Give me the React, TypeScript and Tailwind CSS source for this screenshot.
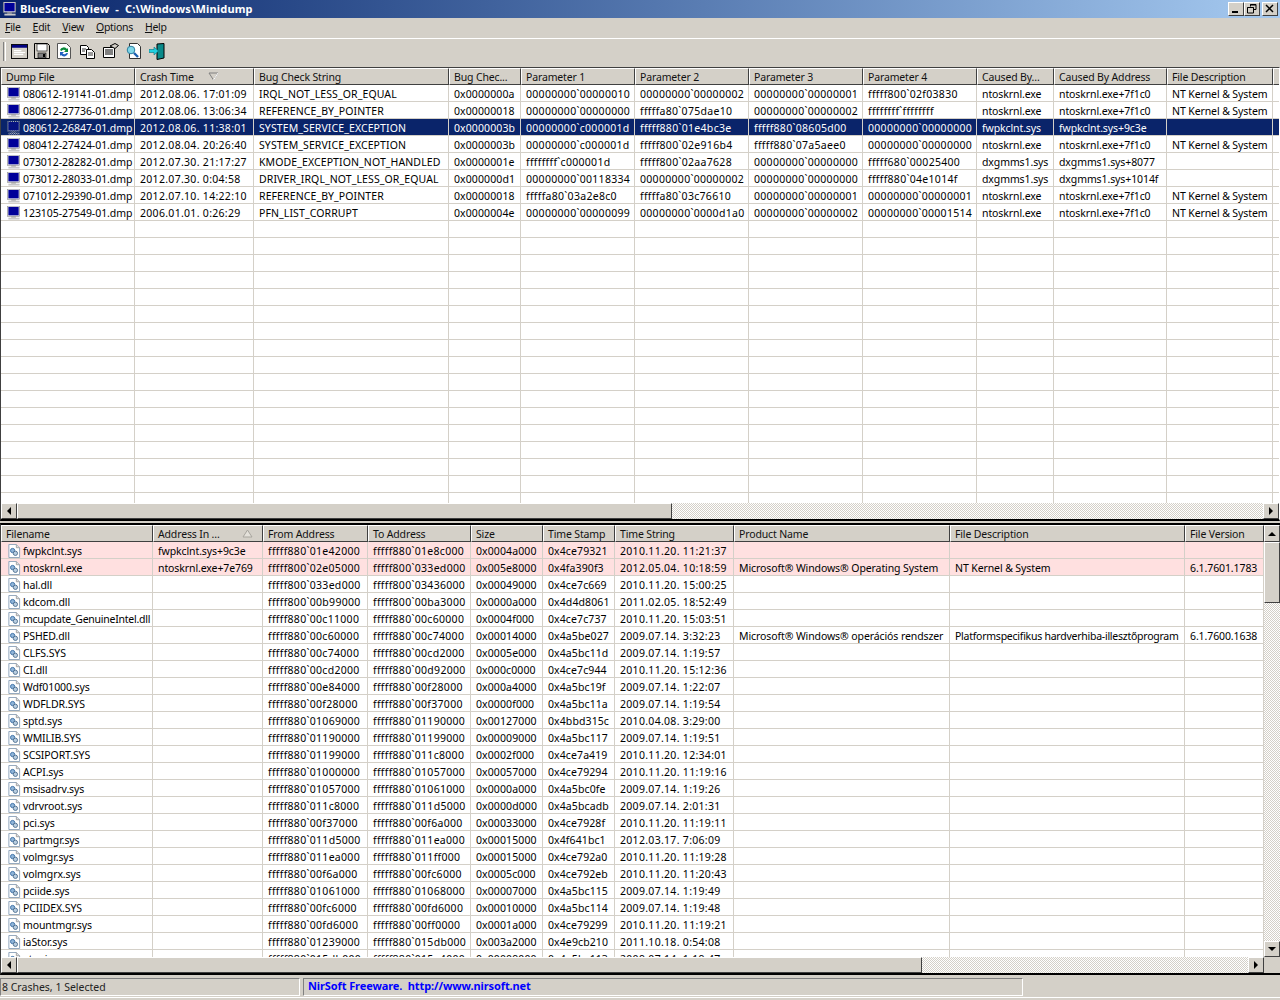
import type { ReactNode } from "react";

const top = [
  { w: 134, title: "Dump File" },
  { w: 119, title: "Crash Time", sort: "down" },
  { w: 195, title: "Bug Check String" },
  { w: 72, title: "Bug Chec..." },
  { w: 114, title: "Parameter 1" },
  { w: 114, title: "Parameter 2" },
  { w: 114, title: "Parameter 3" },
  { w: 114, title: "Parameter 4" },
  { w: 77, title: "Caused By..." },
  { w: 113, title: "Caused By Address" },
  { w: 106, title: "File Description" },
];

const crashes = [
  ["080612-19141-01.dmp", "2012.08.06. 17:01:09", "IRQL_NOT_LESS_OR_EQUAL", "0x0000000a", "00000000`00000010", "00000000`00000002", "00000000`00000001", "fffff800`02f03830", "ntoskrnl.exe", "ntoskrnl.exe+7f1c0", "NT Kernel & System"],
  ["080612-27736-01.dmp", "2012.08.06. 13:06:34", "REFERENCE_BY_POINTER", "0x00000018", "00000000`00000000", "fffffa80`075dae10", "00000000`00000002", "ffffffff`ffffffff", "ntoskrnl.exe", "ntoskrnl.exe+7f1c0", "NT Kernel & System"],
  ["080612-26847-01.dmp", "2012.08.06. 11:38:01", "SYSTEM_SERVICE_EXCEPTION", "0x0000003b", "00000000`c000001d", "fffff880`01e4bc3e", "fffff880`08605d00", "00000000`00000000", "fwpkclnt.sys", "fwpkclnt.sys+9c3e", ""],
  ["080412-27424-01.dmp", "2012.08.04. 20:26:40", "SYSTEM_SERVICE_EXCEPTION", "0x0000003b", "00000000`c000001d", "fffff800`02e916b4", "fffff880`07a5aee0", "00000000`00000000", "ntoskrnl.exe", "ntoskrnl.exe+7f1c0", "NT Kernel & System"],
  ["073012-28282-01.dmp", "2012.07.30. 21:17:27", "KMODE_EXCEPTION_NOT_HANDLED", "0x0000001e", "ffffffff`c000001d", "fffff800`02aa7628", "00000000`00000000", "fffff680`00025400", "dxgmms1.sys", "dxgmms1.sys+8077", ""],
  ["073012-28033-01.dmp", "2012.07.30. 0:04:58", "DRIVER_IRQL_NOT_LESS_OR_EQUAL", "0x000000d1", "00000000`00118334", "00000000`00000002", "00000000`00000000", "fffff880`04e1014f", "dxgmms1.sys", "dxgmms1.sys+1014f", ""],
  ["071012-29390-01.dmp", "2012.07.10. 14:22:10", "REFERENCE_BY_POINTER", "0x00000018", "fffffa80`03a2e8c0", "fffffa80`03c76610", "00000000`00000001", "00000000`00000001", "ntoskrnl.exe", "ntoskrnl.exe+7f1c0", "NT Kernel & System"],
  ["123105-27549-01.dmp", "2006.01.01. 0:26:29", "PFN_LIST_CORRUPT", "0x0000004e", "00000000`00000099", "00000000`0000d1a0", "00000000`00000002", "00000000`00001514", "ntoskrnl.exe", "ntoskrnl.exe+7f1c0", "NT Kernel & System"],
];

const bottom = [
  { w: 152, title: "Filename" },
  { w: 110, title: "Address In ...", sort: "up" },
  { w: 105, title: "From Address" },
  { w: 103, title: "To Address" },
  { w: 72, title: "Size" },
  { w: 72, title: "Time Stamp" },
  { w: 119, title: "Time String" },
  { w: 216, title: "Product Name" },
  { w: 235, title: "File Description" },
  { w: 79, title: "File Version" },
];

const mods = [
  ["fwpkclnt.sys", "fwpkclnt.sys+9c3e", "fffff880`01e42000", "fffff880`01e8c000", "0x0004a000", "0x4ce79321", "2010.11.20. 11:21:37", "", "", ""],
  ["ntoskrnl.exe", "ntoskrnl.exe+7e769", "fffff800`02e05000", "fffff800`033ed000", "0x005e8000", "0x4fa390f3", "2012.05.04. 10:18:59", "Microsoft® Windows® Operating System", "NT Kernel & System", "6.1.7601.1783"],
  ["hal.dll", "", "fffff800`033ed000", "fffff800`03436000", "0x00049000", "0x4ce7c669", "2010.11.20. 15:00:25"],
  ["kdcom.dll", "", "fffff800`00b99000", "fffff800`00ba3000", "0x0000a000", "0x4d4d8061", "2011.02.05. 18:52:49"],
  ["mcupdate_GenuineIntel.dll", "", "fffff880`00c11000", "fffff880`00c60000", "0x0004f000", "0x4ce7c737", "2010.11.20. 15:03:51"],
  ["PSHED.dll", "", "fffff880`00c60000", "fffff880`00c74000", "0x00014000", "0x4a5be027", "2009.07.14. 3:32:23", "Microsoft® Windows® operációs rendszer", "Platformspecifikus hardverhiba-illesztőprogram", "6.1.7600.1638"],
  ["CLFS.SYS", "", "fffff880`00c74000", "fffff880`00cd2000", "0x0005e000", "0x4a5bc11d", "2009.07.14. 1:19:57"],
  ["CI.dll", "", "fffff880`00cd2000", "fffff880`00d92000", "0x000c0000", "0x4ce7c944", "2010.11.20. 15:12:36"],
  ["Wdf01000.sys", "", "fffff880`00e84000", "fffff880`00f28000", "0x000a4000", "0x4a5bc19f", "2009.07.14. 1:22:07"],
  ["WDFLDR.SYS", "", "fffff880`00f28000", "fffff880`00f37000", "0x0000f000", "0x4a5bc11a", "2009.07.14. 1:19:54"],
  ["sptd.sys", "", "fffff880`01069000", "fffff880`01190000", "0x00127000", "0x4bbd315c", "2010.04.08. 3:29:00"],
  ["WMILIB.SYS", "", "fffff880`01190000", "fffff880`01199000", "0x00009000", "0x4a5bc117", "2009.07.14. 1:19:51"],
  ["SCSIPORT.SYS", "", "fffff880`01199000", "fffff880`011c8000", "0x0002f000", "0x4ce7a419", "2010.11.20. 12:34:01"],
  ["ACPI.sys", "", "fffff880`01000000", "fffff880`01057000", "0x00057000", "0x4ce79294", "2010.11.20. 11:19:16"],
  ["msisadrv.sys", "", "fffff880`01057000", "fffff880`01061000", "0x0000a000", "0x4a5bc0fe", "2009.07.14. 1:19:26"],
  ["vdrvroot.sys", "", "fffff880`011c8000", "fffff880`011d5000", "0x0000d000", "0x4a5bcadb", "2009.07.14. 2:01:31"],
  ["pci.sys", "", "fffff880`00f37000", "fffff880`00f6a000", "0x00033000", "0x4ce7928f", "2010.11.20. 11:19:11"],
  ["partmgr.sys", "", "fffff880`011d5000", "fffff880`011ea000", "0x00015000", "0x4f641bc1", "2012.03.17. 7:06:09"],
  ["volmgr.sys", "", "fffff880`011ea000", "fffff880`011ff000", "0x00015000", "0x4ce792a0", "2010.11.20. 11:19:28"],
  ["volmgrx.sys", "", "fffff880`00f6a000", "fffff880`00fc6000", "0x0005c000", "0x4ce792eb", "2010.11.20. 11:20:43"],
  ["pciide.sys", "", "fffff880`01061000", "fffff880`01068000", "0x00007000", "0x4a5bc115", "2009.07.14. 1:19:49"],
  ["PCIIDEX.SYS", "", "fffff880`00fc6000", "fffff880`00fd6000", "0x00010000", "0x4a5bc114", "2009.07.14. 1:19:48"],
  ["mountmgr.sys", "", "fffff880`00fd6000", "fffff880`00ff0000", "0x0001a000", "0x4ce79299", "2010.11.20. 11:19:21"],
  ["iaStor.sys", "", "fffff880`01239000", "fffff880`015db000", "0x003a2000", "0x4e9cb210", "2011.10.18. 0:54:08"],
  ["atapi.sys", "", "fffff880`015db000", "fffff880`015e4000", "0x00009000", "0x4a5bc113", "2009.07.14. 1:19:47"],
];

// Noto Sans runs a bit off from the original font, so spacing is nudged per kind of value
function spacing(text: string) {
  if (text.includes("`") || /^\d{4}\.\d\d/.test(text)) return "tracking-[0.3px]";
  if (text.startsWith("0x") || /^[A-Z_]+$/.test(text)) return "tracking-[0.1px]";
  if (/^mcupdate|^Platform/.test(text)) return "tracking-[-0.25px]";
  if (text.endsWith(".dmp")) return "tracking-[-0.05px]";
  return "tracking-[-0.1px]";
}

function MonitorIcon({ selected }: { selected?: boolean }) {
  return (
    <svg width="16" height="14" viewBox="0 0 16 15" className="shrink-0">
      <defs>
        <pattern id="dither" width="2" height="2" patternUnits="userSpaceOnUse">
          <rect width="1" height="1" fill="#0a246a" />
          <rect x="1" y="1" width="1" height="1" fill="#0a246a" />
        </pattern>
      </defs>
      <rect x="1" y="0" width="13" height="11" fill="#e8e8e8" stroke="#808080" strokeWidth="0.6" />
      <rect x="2" y="1" width="11" height="9" fill="#000099" />
      <rect x="5" y="11" width="5" height="1.5" fill="#a0a0a0" />
      <rect x="2" y="12.5" width="12" height="2" fill="#c8c8c8" />
      {selected && <rect x="0" y="0" width="16" height="15" fill="url(#dither)" />}
    </svg>
  );
}

function ModuleIcon() {
  return (
    <svg width="14" height="14" viewBox="0 0 14 15" className="ml-[1px] mr-[1px] shrink-0">
      <path d="M1.5.5h8l3.5 3.5v10.5h-11.500z" fill="#fff" stroke="#8aa0b8" />
      <path d="M9.500.5v3.500h3.500" fill="#e0e0e0" stroke="#a0a0a0" />
      <circle cx="5.500" cy="7" r="2.300" fill="#8fb4d8" stroke="#3a6ea5" />
      <circle cx="8.500" cy="10" r="2.300" fill="#b8cde0" stroke="#50708f" />
    </svg>
  );
}

function SortMark({ dir }: { dir: string }) {
  return (
    <svg width="11" height="9" viewBox="0 0 11 9" className={`absolute top-[3px] ${dir === "down" ? "right-[34px]" : "right-[9px]"}`}>
      {dir === "down" ? (
        <>
          <path d="M1 1h9L5.500 8z" fill="#d4d0c8" stroke="#808080" />
          <path d="M10 1L5.500 8" stroke="#fff" />
        </>
      ) : (
        <path d="M5.500 1L1 8h9z" fill="#e4e1da" stroke="#a8a59e" />
      )}
    </svg>
  );
}

function Header({ cols, rest }: { cols: { w: number; title: string; sort?: string }[]; rest: boolean }) {
  return (
    <div className="flex h-[17px] shrink-0">
      {cols.map((c) => (
        <div
          key={c.title}
          style={{ width: c.w }}
          className="relative h-[17px] shrink-0 truncate border-r border-b border-r-[#404040] border-b-[#404040] border-t border-l border-t-white border-l-white bg-[#d4d0c8] pl-[4px] leading-[17px] tracking-[-0.15px] text-[#111]"
        >
          {c.title}
          {c.sort && <SortMark dir={c.sort} />}
        </div>
      ))}
      {rest && <div className="h-[17px] flex-1 border-t border-l border-b border-t-white border-l-white border-b-[#404040] bg-[#d4d0c8]" />}
    </div>
  );
}

function Row({ cells, cols, icon, selected, pink }: { cells: string[]; cols: { w: number }[]; icon?: ReactNode; selected?: boolean; pink?: boolean }) {
  const bg = selected ? "bg-[#0a246a] text-white" : pink ? "bg-[#ffe0e0] text-black" : "text-black";
  return (
    <div className={`flex h-[17px] shrink-0 border-b border-[#d4d0c8] ${bg}`}>
      {cols.map((c, i) => (
        <div
          key={i}
          style={{ width: c.w }}
          className="flex h-[16px] shrink-0 items-start overflow-hidden whitespace-nowrap border-r border-[#d4d0c8] pl-[5px] pt-[2px] leading-[14px]"
        >
          {i === 0 && icon}
          <span className={`${i === 0 ? "pl-[1px]" : ""} ${spacing(cells[i] ?? "")}`}>{cells[i] ?? ""}</span>
        </div>
      ))}
      <div className="flex-1" />
    </div>
  );
}

function ArrowBtn({ dir, tall }: { dir: "left" | "right" | "up" | "down"; tall?: boolean }) {
  const d = { left: "M6 0v8L2 4z", right: "M2 0v8l4-4z", up: "M0 6h8L4 2z", down: "M0 2h8L4 6z" }[dir];
  return (
    <div className={`flex w-[16px] shrink-0 items-center justify-center border border-t-white border-l-white border-r-[#404040] border-b-[#404040] bg-[#d4d0c8] ${tall ? "h-[17px]" : "h-[16px]"}`}>
      <svg width="8" height="8" viewBox="0 0 8 8">
        <path d={d} fill="#000" />
      </svg>
    </div>
  );
}

const hatch = "bg-[repeating-conic-gradient(#d4d0c8_0_25%,#ffffff_0_50%)] bg-[length:2px_2px]";
const thumb = "border border-t-white border-l-white border-r-[#404040] border-b-[#404040] bg-[#d4d0c8]";

function HScroll({ thumbW, corner }: { thumbW: number; corner?: boolean }) {
  return (
    <div className="flex h-[16px] shrink-0">
      <ArrowBtn dir="left" />
      <div style={{ width: thumbW }} className={`h-[16px] shrink-0 ${thumb}`} />
      <div className={`h-[16px] flex-1 ${hatch}`} />
      <ArrowBtn dir="right" />
      {corner && <div className="h-[16px] w-[16px] shrink-0 bg-[#d4d0c8]" />}
    </div>
  );
}

function ToolIcons() {
  return (
    <div className="flex items-start">
      <div className="w-[23px] pt-[1px]">
        <svg width="17" height="15" viewBox="0 0 18 16">
          <rect x="0.500" y="0.500" width="17" height="15" fill="#d4d0c8" stroke="#000" />
          <rect x="1" y="1" width="16" height="3" fill="#000080" />
          <path d="M3 7h8M3 9h12M3 11h10" stroke="#fff" strokeWidth="1.200" />
        </svg>
      </div>
      <div className="w-[23px]">
        <svg width="16" height="16" viewBox="0 0 16 16">
          <path d="M.5.500h13l2 2v13H.5z" fill="#d4d0c8" stroke="#000" />
          <rect x="3" y="1" width="10" height="7" fill="#fff" stroke="#000" strokeWidth="0.600" />
          <rect x="4" y="10" width="8" height="5" fill="#808080" stroke="#000" strokeWidth="0.600" />
          <rect x="9" y="11" width="2" height="3" fill="#000" />
        </svg>
      </div>
      <div className="w-[23px]">
        <svg width="14" height="16" viewBox="0 0 14 16">
          <path d="M.5.500h9l4 4v11H.5z" fill="#fff" stroke="#555" />
          <path d="M3 7a4 4 0 0 1 7-1l1-1v4H7l1.500-1.500A2.500 2.500 0 0 0 4.500 8z" fill="#0a8a3a" />
          <path d="M11 10a4 4 0 0 1-7 2l-1 1V9h4l-1.500 1.500a2.500 2.500 0 0 0 4 -.5z" fill="#2060c0" />
        </svg>
      </div>
      <div className="w-[23px] pt-[2px]">
        <svg width="15" height="14" viewBox="0 0 15 14">
          <path d="M.5.500h6l2 2v7H.5z" fill="#fff" stroke="#000" />
          <path d="M6.500 4.500h5l3 3v6h-8z" fill="#fff" stroke="#000" />
          <path d="M2 4h4M2 6h3M8 8h5M8 10h5" stroke="#000" strokeWidth="0.800" />
        </svg>
      </div>
      <div className="w-[23px]">
        <svg width="16" height="15" viewBox="0 0 16 15">
          <path d="M.5 4.500h11v10H.5z" fill="#fff" stroke="#000" />
          <path d="M2 7h8M2 9h8M2 11h8" stroke="#000" />
          <path d="M7 3l5-2.500 3.500 2-3.500 3z" fill="#d4d0c8" stroke="#000" />
        </svg>
      </div>
      <div className="w-[23px]">
        <svg width="15" height="16" viewBox="0 0 15 16">
          <path d="M3.500.500h8l3 3v12h-11z" fill="#fff" stroke="#333" />
          <circle cx="5" cy="7" r="3.800" fill="#7fd6e8" stroke="#2a7fa0" />
          <path d="M8 10l4 4" stroke="#1a5fb0" strokeWidth="2.400" />
        </svg>
      </div>
      <svg width="17" height="17" viewBox="0 0 17 17">
        <path d="M8 1l7-.5V15l-7 1.500z" fill="#0a8a8a" stroke="#000" />
        <path d="M0 6.500h5V4l4.500 4L5 12V9.500H0z" fill="#20d0e0" stroke="#087080" strokeWidth="0.600" />
      </svg>
    </div>
  );
}

function WinBtn({ kind }: { kind: "min" | "max" | "close" }) {
  return (
    <div className="flex h-[14px] w-[16px] items-center justify-center border border-t-white border-l-white border-r-[#404040] border-b-[#404040] bg-[#d4d0c8]">
      <svg width="10" height="10" viewBox="0 0 10 10">
        {kind === "min" && <rect x="1" y="7" width="6" height="2" fill="#000" />}
        {kind === "max" && <path d="M3.500 2.500V.5h5.500v5h-2M.5 3.500h6v5.500h-6zM.5 3.500h6M3 1h6" fill="none" stroke="#000" />}
        {kind === "close" && <path d="M1 1l7 7M8 1l-7 7" stroke="#000" strokeWidth="1.500" />}
      </svg>
    </div>
  );
}

export default function App() {
  return (
    <div className="flex h-[1000px] w-[1280px] flex-col overflow-hidden bg-[#d4d0c8] font-['Noto_Sans','Liberation_Sans',sans-serif] text-[10.5px]">
      {/* title bar */}
      <div className="flex h-[18px] shrink-0 items-center justify-between bg-gradient-to-r from-[#0a246a] to-[#a6caf0] pl-[2px] pr-[2px]">
        <div className="flex items-center gap-[2px]">
          <MonitorIcon />
          <span className="whitespace-pre text-[11px] font-bold tracking-[0.15px] text-white">BlueScreenView  -  C:\Windows\Minidump</span>
        </div>
        <div className="flex items-center">
          <WinBtn kind="min" />
          <WinBtn kind="max" />
          <div className="w-[2px]" />
          <WinBtn kind="close" />
        </div>
      </div>

      {/* menu */}
      <div className="flex h-[20px] shrink-0 items-center gap-[12px] pl-[5px] tracking-[-0.3px] text-[#111]">
        {["File", "Edit", "View", "Options", "Help"].map((m) => (
          <span key={m}>
            <span className="underline">{m[0]}</span>
            {m.slice(1)}
          </span>
        ))}
      </div>

      {/* toolbar */}
      <div className="flex h-[29px] shrink-0 items-start gap-[5px] border-t border-t-white pl-[3px] pt-[4px]">
        <div className="-mt-[1px] h-[19px] w-[3px] border-l border-r border-l-[#808080] border-r-white" />
        <ToolIcons />
      </div>

      {/* crash list */}
      <div className="flex h-[454px] shrink-0 flex-col border-t border-l border-r border-b-2 border-t-[#404040] border-l-[#404040] border-r-white border-b-black bg-white">
        <Header cols={top} rest />
        <div className="h-[418px] shrink-0 overflow-hidden">
          {crashes.map((r, i) => (
            <Row key={r[0]} cells={r} cols={top} selected={i === 2} icon={<MonitorIcon selected={i === 2} />} />
          ))}
          {Array.from({ length: 17 }).map((_, i) => (
            <Row key={i} cells={[]} cols={top} />
          ))}
        </div>
        <HScroll thumbW={655} />
      </div>

      {/* splitter */}
      <div className="h-[2px] shrink-0" />

      {/* module list */}
      <div className="flex h-[452px] shrink-0 border-t-2 border-l border-b-2 border-t-black border-l-[#404040] border-b-black bg-white">
        <div className="flex min-w-0 flex-1 flex-col">
          <div className="flex min-h-0 flex-1">
            <div className="flex min-w-0 flex-1 flex-col overflow-hidden">
              <Header cols={bottom} rest={false} />
              <div className="min-h-0 flex-1 overflow-hidden">
                {mods.map((r, i) => (
                  <Row key={r[0]} cells={r} cols={bottom} pink={i < 2} icon={<ModuleIcon />} />
                ))}
              </div>
            </div>
            <div className="flex w-[16px] shrink-0 flex-col">
              <ArrowBtn dir="up" tall />
              <div className={`h-[61px] shrink-0 ${thumb}`} />
              <div className={`flex-1 ${hatch}`} />
              <ArrowBtn dir="down" />
            </div>
          </div>
          <HScroll thumbW={905} corner />
        </div>
      </div>

      {/* status bar */}
      <div className="flex h-[25px] shrink-0 flex-col pt-[3px] text-[#222]">
        <div className="flex h-[18px] shrink-0 items-stretch gap-[3px]">
          <div className="w-[300px] border border-t-[#808080] border-l-[#808080] border-r-white border-b-white pl-[1px] leading-[16px]">
            8 Crashes, 1 Selected
          </div>
          <div className="w-[720px] border border-t-[#808080] border-l-[#808080] border-r-white border-b-white pl-[4px] font-bold leading-[14px] tracking-[-0.1px] text-[#0000ff]">
            <span className="whitespace-pre text-[11px]">NirSoft Freeware.  http://www.nirsoft.net</span>
          </div>
        </div>
        <div className="mt-[1px] h-px bg-white" />
      </div>
    </div>
  );
}
